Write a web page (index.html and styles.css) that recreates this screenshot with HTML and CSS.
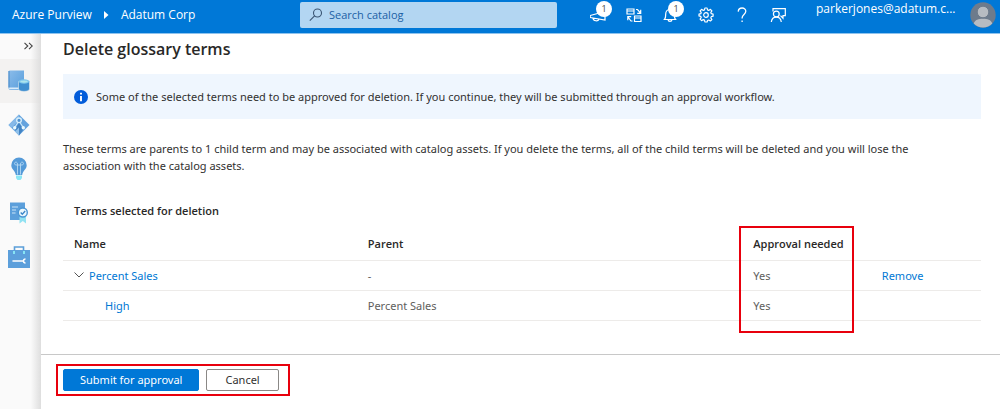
FILE: index.html
```html
<!DOCTYPE html>
<html lang="en">
<head>
<meta charset="utf-8">
<title>Delete glossary terms - Azure Purview</title>
<link rel="stylesheet" href="styles.css">
</head>
<body>
<header class="topbar">
  <nav class="crumbs" aria-label="Breadcrumb">
    <a href="#">Azure Purview</a>
    <svg class="crumb-arrow" width="5" height="8" viewBox="0 0 5 8"><path d="M0 0l4.500 4L0 8z" fill="#fff"/></svg>
    <a href="#">Adatum Corp</a>
  </nav>
  <label class="search">
    <svg width="14" height="14" viewBox="0 0 14 14" fill="none" stroke="#3a5573" stroke-width="1.100"><circle cx="8.500" cy="5" r="4"/><path d="M5.600 7.900L.8 12.700"/></svg>
    <input type="search" placeholder="Search catalog" aria-label="Search catalog">
  </label>
  <div class="tools">
    <button class="tool" aria-label="Announcements"><svg width="16" height="16" viewBox="0 0 16 16" fill="none" stroke="#fff" stroke-width="1.200"><path d="M.2 8.500L15 4.500V13L.2 10.500zM3 11c0 3.200 5.500 3.800 6 1.200"/></svg><span class="badge">1</span></button>
    <button class="tool" aria-label="Switch account"><svg width="16" height="16" viewBox="0 0 16 16" fill="none" stroke="#fff" stroke-width="1.200"><path d="M1 2h7v5H1zM1 4h7M8.500 9H15v5.500H8.500zM8.500 11H15M10 2.500h1.500L14.500 6M14.700 2.800v3.500h-3.500M6.500 14H5L2 10M1.800 13.200V9.700h3.400"/></svg></button>
    <button class="tool" aria-label="Notifications"><svg width="16" height="16" viewBox="0 0 16 16" fill="none" stroke="#fff" stroke-width="1.200"><path d="M2.500 12.500c1-1 1.200-2 1.200-5.500C3.700 4 5.600 2.500 8 2.500S12.300 4 12.300 7c0 3.500.2 4.500 1.200 5.500zM6 12.700c.3 2.200 3.700 2.200 4 0"/></svg><span class="badge">1</span></button>
    <button class="tool" aria-label="Settings"><svg width="16" height="16" viewBox="0 0 16 16" fill="none" stroke="#fff" stroke-width="1.200" stroke-linejoin="round"><path d="M6.900 1h2.200l.4 1.900 1.200.5 1.700-1.100 1.500 1.500-1.100 1.700.5 1.200 1.800.4v2.100l-1.800.4-.5 1.300 1.100 1.600-1.500 1.500-1.700-1-1.200.5L9.100 15H6.900l-.4-1.900-1.200-.5-1.700 1.100-1.500-1.500 1.100-1.700-.5-1.200L1 8.900V7.100l1.800-.4.400-1.200-1.100-1.700 1.500-1.500 1.700 1.100 1.200-.5z"/><circle cx="8" cy="8" r="2.300"/></svg></button>
    <button class="tool" aria-label="Help"><svg width="16" height="16" viewBox="0 0 16 16" fill="none" stroke="#fff" stroke-width="1.300"><path d="M4.200 4.600C4.400 2.400 5.900 1 8.100 1c2.200 0 3.700 1.300 3.700 3.300 0 3-3.700 3.500-3.700 6.700v.5M8.100 13.500V15"/></svg></button>
    <button class="tool" aria-label="Feedback"><svg width="16" height="16" viewBox="0 0 16 16" fill="none" stroke="#fff" stroke-width="1.200"><path d="M3 4.500V1.700h12.300v7H13v2.500L10.500 8.700"/><circle cx="6.300" cy="7" r="2.900"/><path d="M1.300 15c.4-3 2.400-4.800 5-4.800s4.600 1.800 5 4.800"/></svg></button>
  </div>
  <span class="user">parkerjones@adatum.c...</span>
  <button class="avatar" aria-label="Account"><svg width="26" height="26" viewBox="0 0 26 26"><circle cx="13" cy="13" r="12.700" fill="#6d7b8c"/><path d="M3.700 21.500C5 17.800 8.500 16.800 13 16.800s8 1 9.300 4.700a12.700 12.700 0 0 1-18.600 0z" fill="#b7bcc2"/><circle cx="13" cy="10" r="5.800" fill="#b7bcc2" stroke="#6d7b8c"/></svg></button>
</header>
<div class="shell">
  <aside class="rail">
    <button class="expand" aria-label="Expand menu"><svg width="9" height="8" viewBox="0 0 9 8" fill="none" stroke="#444" stroke-width="1.100"><path d="M.5.800L3.800 4 .5 7.200M5 .800L8.300 4 5 7.200"/></svg></button>
    <nav class="rail-nav" aria-label="Main">
      <a class="rail-item active" href="#" aria-label="Data catalog"><svg width="22" height="22" viewBox="0 0 22 22"><defs><linearGradient id="sky" x1="0" y1="0" x2="1" y2="1"><stop offset="0" stop-color="#8bbcea"/><stop offset="1" stop-color="#579ddb"/></linearGradient></defs><path d="M1.500.5h14.500v19.500H2.500Q.5 20 .5 18V1.500z" fill="url(#sky)"/><path d="M.5 17.500h15.500v1.700H1.500z" fill="#d9ecfa"/><path d="M1 1v16.500" stroke="#4488c8"/><path d="M10.500 11.500v7.500c0 3.200 11 3.200 11 0v-7.500z" fill="#3f8fd0" stroke="#f3f2f1" stroke-width=".5"/><ellipse cx="16" cy="11.500" rx="5.500" ry="2.200" fill="#7cc5eb"/><ellipse cx="16" cy="11.600" rx="3.700" ry="1.100" fill="#ace5ed"/></svg></a>
      <a class="rail-item" href="#" aria-label="Data map"><svg width="22" height="22" viewBox="0 0 22 22"><path d="M11 .5L21.500 11 11 21.500.5 11z" fill="#64a3de"/><path d="M11 .5L.5 11l3 3L11 6z" fill="#86b9e8"/><path d="M11 8l4 8-4 5.500L7 16z" fill="#4384c4"/><path d="M11 13.500V21.500L7 17.500z" fill="#8fc0ea"/><path d="M10 8.500L7 13M12 8.500l3 4.500" stroke="#c9e6f8" stroke-width="1.200"/><circle cx="11" cy="6.300" r="2.300" fill="#4f92d0" stroke="#d6eefb" stroke-width="1.400"/><circle cx="6.700" cy="13.700" r="1.700" fill="#e8f8fd"/><circle cx="15.300" cy="13.700" r="1.700" fill="#e8f8fd"/></svg></a>
      <a class="rail-item" href="#" aria-label="Insights"><svg width="22" height="24" viewBox="0 0 22 24"><path d="M11 .5a7.700 7.700 0 0 1 7.700 7.700c0 4.100-4 5.400-4.500 9.800H7.800C7.300 13.600 3.300 12.300 3.300 8.200A7.700 7.700 0 0 1 11 .5z" fill="#549ad8"/><path d="M9.500 17.500V7C9.500 4.500 6.500 4.700 6.500 6.500S8.500 8 11 8s4.500.3 4.500-1.500-3-2-3 .5v10.500" fill="none" stroke="#b4d8f3" stroke-width=".9"/><path d="M8 18.500h6v2.500l-1.500 2h-3L8 21z" fill="#8be6f5"/></svg></a>
      <a class="rail-item" href="#" aria-label="Policies"><svg width="22" height="22" viewBox="0 0 22 22"><path d="M2 .5h15v17.500H2z" fill="#5c9fdb"/><path d="M4 5h6M4 8h4M4 11h3.500" stroke="#c8e4f7" stroke-width="1.200"/><path d="M11.500 14.500h6.500v7l-3.200-2.500-3.300 2.500z" fill="#91e2f2"/><circle cx="14.800" cy="10.500" r="4.500" fill="#eaf7fd" stroke="#4b96d4" stroke-width="1.400"/><path d="M12.700 10.500l1.600 1.700 2.900-3.200" fill="none" stroke="#3a86c8" stroke-width="1.300"/></svg></a>
      <a class="rail-item" href="#" aria-label="Management"><svg width="22" height="22" viewBox="0 0 22 22"><path d="M6.500 4.500V1h9v3.500" fill="none" stroke="#5b9fd9" stroke-width="1.600"/><path d="M0 4h22v18H0z" fill="#5c9fdb"/><path d="M6 5v3M16 5v3" stroke="#8ff0fa" stroke-width="1.700"/><path d="M5 15h10" stroke="#fff" stroke-width="1.500" stroke-linecap="round"/><path d="M17.500 13a2 2 0 1 0 0 4" fill="none" stroke="#fff" stroke-width="1.500"/></svg></a>
    </nav>
  </aside>
  <div class="panel">
    <main class="content">
      <h1>Delete glossary terms</h1>
      <div class="notice" role="status">
        <svg width="14" height="14" viewBox="0 0 14 14"><circle cx="7" cy="7" r="7" fill="#015cda"/><path d="M7 6v5.200M7 2.700v1.900" stroke="#fff" stroke-width="1.900"/></svg>
        <span>Some of the selected terms need to be approved for deletion. If you continue, they will be submitted through an approval workflow.</span>
      </div>
      <p class="summary">These terms are parents to 1 child term and may be associated with catalog assets. If you delete the terms, all of the child terms will be deleted and you will lose the association with the catalog assets.</p>
      <table class="terms">
        <caption>Terms selected for deletion</caption>
        <thead>
          <tr><th class="col-name" scope="col">Name</th><th class="col-parent" scope="col">Parent</th><th class="col-approval marked" scope="col">Approval needed</th><td></td></tr>
        </thead>
        <tbody>
          <tr><td><div class="term"><button class="toggle" aria-label="Collapse Percent Sales" aria-expanded="true"><svg width="10" height="6" viewBox="0 0 10 6" fill="none" stroke="#555"><path d="M.5.500L5 5 9.500.500"/></svg></button><a href="#">Percent Sales</a></div></td><td>-</td><td>Yes</td><td><a href="#">Remove</a></td></tr>
          <tr><td><div class="term child"><a href="#">High</a></div></td><td>Percent Sales</td><td>Yes</td><td></td></tr>
        </tbody>
      </table>
    </main>
    <footer class="footer">
      <div class="actions">
        <button class="btn primary">Submit for approval</button>
        <button class="btn">Cancel</button>
      </div>
    </footer>
  </div>
</div>
</body>
</html>
```
FILE: styles.css
```css
*, *::after { box-sizing: border-box; }
body {
  margin: 0;
  min-height: 100vh;
  display: flex;
  flex-direction: column;
  font-family: "Noto Sans", "Open Sans", sans-serif;
  font-size: 11px;
  line-height: 17px;
  color: #323130;
  background: #fff;
}
button { font: inherit; color: inherit; border: 0; padding: 0; background: none; cursor: pointer; }
a { color: #0078d4; text-decoration: none; }
svg { display: block; flex: none; }

.topbar {
  display: flex;
  align-items: center;
  height: 34px;
  padding: 0 4px 4px 12px;
  font-family: "Open Sans", "Noto Sans", sans-serif;
  color: #fff;
  background: #0078d7;
  border-bottom: 1px solid #8ec3ee;
}
.crumbs { display: flex; align-items: center; flex: 0 0 288px; gap: 12px; font-size: 12px; }
.crumbs a { color: #fff; }
.search {
  display: flex;
  align-items: center;
  gap: 6px;
  flex: 1 1 0;
  height: 26px;
  padding: 0 9px;
  border-radius: 2px;
  background: #b3d6f2;
}
.search input {
  flex: 1;
  min-width: 0;
  padding: 0;
  border: 0;
  outline: 0;
  font: inherit;
  font-size: 11px;
  color: #1c5fa5;
  background: none;
}
.search input::placeholder { color: #1c5fa5; opacity: 1; }
.tools { display: flex; margin-left: 23px; }
.tool { position: relative; display: grid; place-items: center; width: 36px; height: 28px; }
.badge {
  position: absolute;
  top: 0;
  right: 4px;
  width: 16px;
  height: 16px;
  border-radius: 50%;
  font-size: 9px;
  line-height: 16px;
  color: #444;
  background: #fff;
}
.user { align-self: flex-start; margin-left: 20px; width: 142px; font-size: 12px; white-space: nowrap; }
.avatar { margin-left: 12px; }

.shell { display: flex; flex: 1; }
.rail { flex: 0 0 41px; background: linear-gradient(to right, #fafafa 75%, #dedede); }
.expand { display: flex; justify-content: flex-end; align-items: center; width: 100%; height: 25px; padding: 0 8px 1px 0; }
.rail-item { display: grid; align-items: center; height: 44px; padding-left: 8px; }
.rail-item.active { background: linear-gradient(to right, #f3f2f1 75%, #dedede); }

.panel { display: flex; flex-direction: column; flex: 1; min-width: 0; }
.content { flex: 1; padding: 3px 19px 20px 22px; }
h1 { margin: 0; font-family: "Open Sans", "Noto Sans", sans-serif; font-size: 16px; line-height: 24px; font-weight: 600; color: #292827; }
.notice { display: flex; align-items: center; gap: 8px; min-height: 45px; margin-top: 13px; padding: 4px 11px; background: #eff6fe; }
.summary { margin: 21px 0 28px; padding-right: 24px; }

.terms { width: 100%; border-collapse: collapse; table-layout: fixed; color: #605e5c; }
.terms caption, .terms th { font-family: "Open Sans", "Noto Sans", sans-serif; font-weight: 600; color: #292827; text-align: left; }
.terms caption { padding: 0 11px 8px; }
.terms th, .terms td { height: 30px; padding: 0 11px; text-align: left; border-bottom: 1px solid #edebe9; }
.terms th { height: 33px; white-space: nowrap; }
.col-name { width: 32%; }
.col-parent { width: 42%; }
.col-approval { width: 14%; }
.term { display: flex; align-items: center; gap: 5px; }
.term.child { padding-left: 31px; }

.marked { position: relative; }
.marked::after {
  content: "";
  position: absolute;
  top: -1px;
  left: -3px;
  width: 115px;
  height: 107px;
  border: 2px solid #e8000d;
  pointer-events: none;
}

.footer { padding: 9px 15px 13px; border-top: 1px solid #c8c8c8; }
.actions { display: inline-flex; gap: 7px; padding: 3px 9px 3px 5px; border: 2px solid #e8000d; }
.btn { height: 22px; padding: 0 18px; border: 1px solid #8a8886; border-radius: 2px; line-height: 18px; background: #fff; }
.btn.primary { padding: 0 16px; color: #fff; border-color: #0078d7; background: #0078d7; }
```
